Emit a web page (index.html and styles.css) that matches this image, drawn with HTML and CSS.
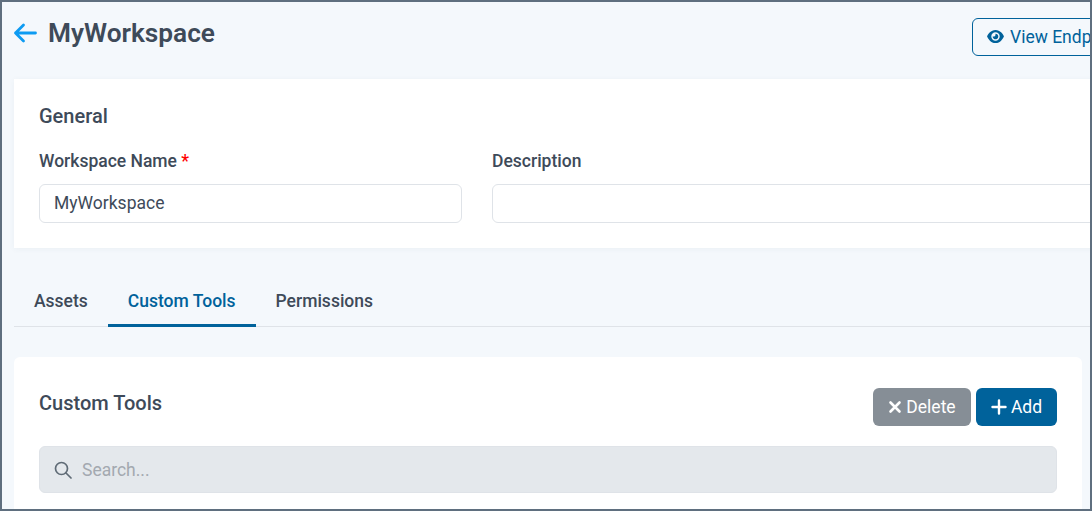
FILE: index.html
```html
<!DOCTYPE html>
<html lang="en">
<head>
<meta charset="utf-8">
<title>MyWorkspace</title>
<link rel="stylesheet" href="styles.css">
</head>
<body>
<div class="frame">
  <div class="page">
    <header class="top">
      <div class="title-group">
        <svg class="back" viewBox="0 0 24 20" width="24" height="20"><path d="M22.5 10H2.5M10.5 2L2.5 10l8 8" fill="none" stroke="#0d9bf2" stroke-width="2.8" stroke-linecap="round" stroke-linejoin="round"/></svg>
        <h1 class="title">MyWorkspace</h1>
      </div>
      <button class="btn-outline">
        <svg viewBox="0 0 576 512" width="17" height="15"><path fill="#00629b" d="M288 32C208 32 144 68 97 112 50 155 19 207 4 243c-3 8-3 17 0 25 15 36 46 88 93 131 47 44 111 81 191 81s144-37 191-81c47-43 78-95 93-131 3-8 3-17 0-25-15-36-46-88-93-131C432 68 368 32 288 32zM144 256a144 144 0 1 1 288 0 144 144 0 1 1-288 0zm144-64c0 35-29 64-64 64-7 0-14-1-20-3-6-2-12 1-12 7 0 7 1 14 3 21 14 51 67 82 118 68s82-67 68-118c-11-42-48-69-89-71-6 0-9 6-7 12 2 6 3 13 3 20z"/></svg>
        <span>View Endpoints</span>
      </button>
    </header>

    <section class="card general">
      <h2 class="heading">General</h2>
      <div class="fields">
        <div class="field">
          <label class="label">Workspace Name <span class="req">*</span></label>
          <div class="input">MyWorkspace</div>
        </div>
        <div class="field">
          <label class="label">Description</label>
          <div class="input"></div>
        </div>
      </div>
    </section>

    <nav class="tabs">
      <a class="tab">Assets</a>
      <a class="tab active">Custom Tools</a>
      <a class="tab">Permissions</a>
    </nav>

    <section class="card tools">
      <div class="tools-head">
        <h2 class="heading">Custom Tools</h2>
        <div class="actions">
          <button class="btn btn-grey"><svg viewBox="0 0 14 14" width="14" height="14"><path d="M2.5 2.5l9 9M11.5 2.5l-9 9" stroke="#fff" stroke-width="2.6" stroke-linecap="round"/></svg>Delete</button>
          <button class="btn btn-blue"><svg viewBox="0 0 16 16" width="16" height="16"><path d="M8 1.5v13M1.5 8h13" stroke="#fff" stroke-width="2.4" stroke-linecap="round"/></svg>Add</button>
        </div>
      </div>
      <div class="search">
        <svg viewBox="0 0 18 18" width="18" height="18"><circle cx="7.5" cy="7.5" r="6" fill="none" stroke="#5f6b76" stroke-width="1.7"/><path d="M12 12l5 5" stroke="#5f6b76" stroke-width="1.7" stroke-linecap="round"/></svg>
        <span class="placeholder">Search...</span>
      </div>
    </section>
  </div>
</div>
</body>
</html>
```
FILE: styles.css
```css
* { box-sizing: border-box; }
html, body { margin: 0; padding: 0; }
body { font-family: Roboto, "Liberation Sans", sans-serif; color: #3e4a59; }
.frame {
  width: 1092px; height: 511px;
  border: 2px solid #5f6f7f;
  background: #f4f8fc;
  overflow: hidden;
}
.page { width: 1300px; padding-left: 12px; }
.top { display: flex; justify-content: space-between; width: 1076px; height: 77px; padding-top: 16px; align-items: flex-start; }
.title-group { display: flex; align-items: center; gap: 11px; height: 30px; margin-left: -1px; }
.title { margin: 0; font-size: 26.25px; font-weight: 600; line-height: 30px; color: #3e4a59; }
.btn-outline {
  display: flex; align-items: center; gap: 6px; flex: none;
  margin-right: -202px; width: 320px; height: 38px; padding: 0 14px 1px;
  border: 1px solid #00629b; border-radius: 6px; background: transparent;
  color: #00629b; font: 400 17.5px Roboto, sans-serif; white-space: nowrap;
}
.card { background: #fff; }
.general { height: 169px; padding: 26px 25px 0; width: 1200px; box-shadow: 0 1px 6px rgba(60,80,100,.05); }
.heading { margin: 0; font-size: 20px; font-weight: 500; line-height: 22px; color: #3e4a59; }
.fields { display: grid; grid-template-columns: 423px 640px; gap: 30px; margin-top: 24px; }
.label { display: block; font-size: 17.5px; font-weight: 500; line-height: 20px; color: #3e4a59; }
.req { color: #f00; }
.input {
  height: 39px; margin-top: 13px; padding: 0 14px;
  border: 1px solid #dfe3e8; border-radius: 6px; background: #fff;
  font-size: 17.5px; line-height: 36px; color: #3e4a59;
}
.tabs { display: flex; width: 1078px; height: 79px; padding: 33px 0 0 0; border-bottom: 1px solid #dfe3e8; }
.tab { height: 46px; padding: 0 20px; font-size: 17.5px; font-weight: 500; line-height: 40px; color: #3e4a59; }
.active { color: #00629b; border-bottom: 3px solid #00629b; }
.tools { width: 1068px; height: 200px; margin-top: 30px; padding: 0 25px; border-radius: 6px; }
.tools-head { display: flex; justify-content: space-between; align-items: flex-start; padding-top: 31px; }
.tools-head .heading { padding-top: 4px; }
.actions { display: flex; gap: 5px; }
.btn {
  display: flex; align-items: center; justify-content: center; gap: 4px;
  height: 38px; border: 0; border-radius: 6px; color: #fff;
  font: 400 17.5px Roboto, sans-serif;
}
.btn-grey { width: 98px; background: #868e96; }
.btn-blue { width: 81px; background: #00629b; }
.search {
  display: flex; align-items: center; gap: 10px;
  height: 47px; margin-top: 20px; padding: 0 14px;
  border: 1px solid #dfe3e8; border-radius: 6px; background: #e4e8ec;
}
.placeholder { font-size: 17.5px; color: #a3a9b0; }
```
